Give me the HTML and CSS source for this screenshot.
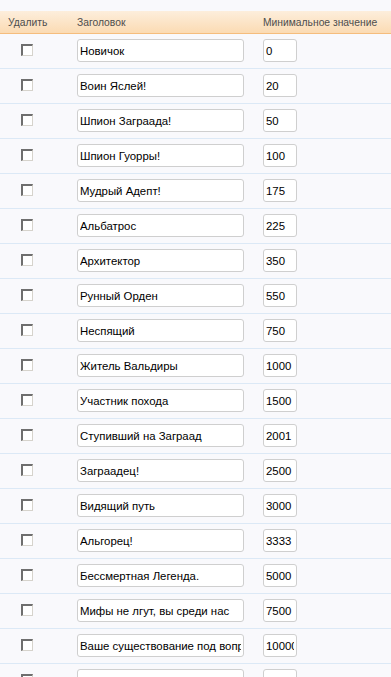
FILE: index.html
```html
<!DOCTYPE html>
<html lang="ru">

<head>
    <meta charset="UTF-8">
    <meta name="viewport" content="width=device-width, initial-scale=1.0">
    <title>Звания</title>
    <link rel="stylesheet" href="styles.css">
</head>

<body>
    <table class="ranks">
        <thead>
            <tr>
                <th class="col-del">Удалить</th>
                <th class="col-title">Заголовок</th>
                <th class="col-min">Минимальное значение</th>
            </tr>
        </thead>
        <tbody>
            <tr><td class="col-del"><input type="checkbox"></td><td class="col-title"><input class="title" type="text" value="Новичок"></td><td class="col-min"><input class="min" type="text" value="0"></td></tr>
            <tr><td class="col-del"><input type="checkbox"></td><td class="col-title"><input class="title" type="text" value="Воин Яслей!"></td><td class="col-min"><input class="min" type="text" value="20"></td></tr>
            <tr><td class="col-del"><input type="checkbox"></td><td class="col-title"><input class="title" type="text" value="Шпион Заграада!"></td><td class="col-min"><input class="min" type="text" value="50"></td></tr>
            <tr><td class="col-del"><input type="checkbox"></td><td class="col-title"><input class="title" type="text" value="Шпион Гуорры!"></td><td class="col-min"><input class="min" type="text" value="100"></td></tr>
            <tr><td class="col-del"><input type="checkbox"></td><td class="col-title"><input class="title" type="text" value="Мудрый Адепт!"></td><td class="col-min"><input class="min" type="text" value="175"></td></tr>
            <tr><td class="col-del"><input type="checkbox"></td><td class="col-title"><input class="title" type="text" value="Альбатрос"></td><td class="col-min"><input class="min" type="text" value="225"></td></tr>
            <tr><td class="col-del"><input type="checkbox"></td><td class="col-title"><input class="title" type="text" value="Архитектор"></td><td class="col-min"><input class="min" type="text" value="350"></td></tr>
            <tr><td class="col-del"><input type="checkbox"></td><td class="col-title"><input class="title" type="text" value="Рунный Орден"></td><td class="col-min"><input class="min" type="text" value="550"></td></tr>
            <tr><td class="col-del"><input type="checkbox"></td><td class="col-title"><input class="title" type="text" value="Неспящий"></td><td class="col-min"><input class="min" type="text" value="750"></td></tr>
            <tr><td class="col-del"><input type="checkbox"></td><td class="col-title"><input class="title" type="text" value="Житель Вальдиры"></td><td class="col-min"><input class="min" type="text" value="1000"></td></tr>
            <tr><td class="col-del"><input type="checkbox"></td><td class="col-title"><input class="title" type="text" value="Участник похода"></td><td class="col-min"><input class="min" type="text" value="1500"></td></tr>
            <tr><td class="col-del"><input type="checkbox"></td><td class="col-title"><input class="title" type="text" value="Ступивший на Заграад"></td><td class="col-min"><input class="min" type="text" value="2001"></td></tr>
            <tr><td class="col-del"><input type="checkbox"></td><td class="col-title"><input class="title" type="text" value="Заграадец!"></td><td class="col-min"><input class="min" type="text" value="2500"></td></tr>
            <tr><td class="col-del"><input type="checkbox"></td><td class="col-title"><input class="title" type="text" value="Видящий путь"></td><td class="col-min"><input class="min" type="text" value="3000"></td></tr>
            <tr><td class="col-del"><input type="checkbox"></td><td class="col-title"><input class="title" type="text" value="Альгорец!"></td><td class="col-min"><input class="min" type="text" value="3333"></td></tr>
            <tr><td class="col-del"><input type="checkbox"></td><td class="col-title"><input class="title" type="text" value="Бессмертная Легенда."></td><td class="col-min"><input class="min" type="text" value="5000"></td></tr>
            <tr><td class="col-del"><input type="checkbox"></td><td class="col-title"><input class="title" type="text" value="Мифы не лгут, вы среди нас"></td><td class="col-min"><input class="min" type="text" value="7500"></td></tr>
            <tr><td class="col-del"><input type="checkbox"></td><td class="col-title"><input class="title" type="text" value="Ваше существование под вопросом"></td><td class="col-min"><input class="min" type="text" value="10000"></td></tr>
            <tr><td class="col-del"><input type="checkbox"></td><td class="col-title"><input class="title" type="text" value=""></td><td class="col-min"><input class="min" type="text" value=""></td></tr>
        </tbody>
    </table>
</body>

</html>
```

FILE: styles.css
```css
body {
    margin: 0;
    padding: 11px 0 0;
    background-color: #f9f9fc;
    font-family: "Liberation Sans", Arial, sans-serif;
}

.ranks {
    width: 100%;
    border-collapse: collapse;
}

.ranks th {
    height: 22px;
    padding: 0;
    text-align: left;
    font-size: 10.3px;
    font-weight: normal;
    color: #4d4d4d;
    background: linear-gradient(#fdeedc, #fbdbb3);
    border-bottom: 1px solid #f5bd7d;
}

.ranks td {
    height: 34px;
    padding: 0;
    vertical-align: top;
    border-bottom: 1px solid #dce9f6;
}

.col-del {
    width: 77px;
}

th.col-del {
    padding-left: 8px !important;
    width: 69px;
}

.col-title {
    width: 186px;
}

input[type="checkbox"] {
    appearance: none;
    display: block;
    width: 12px;
    height: 12px;
    margin: 10px 0 0 21px;
    background: #fff;
    border-top: 2px solid #6e6e6e;
    border-left: 2px solid #6e6e6e;
    border-right: 1px solid #d6d3cc;
    border-bottom: 1px solid #d6d3cc;
    box-sizing: border-box;
}

.title,
.min {
    display: block;
    margin-top: 5px;
    height: 23px;
    box-sizing: border-box;
    padding: 0 2px;
    border: 1px solid #cfcfcf;
    border-radius: 3px;
    background: #fff;
    font-family: "Liberation Sans", Arial, sans-serif;
    font-size: 11.4px;
    color: #000;
    outline: none;
}

.title {
    width: 167px;
}

.min {
    width: 34px;
}
```
